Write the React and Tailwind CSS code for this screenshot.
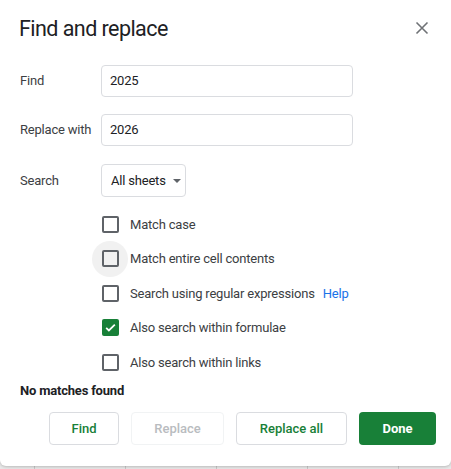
import React from "react";

function Checkbox({ checked, hover }) {
  return (
    <div className="relative flex h-[18px] w-[18px] shrink-0 items-center justify-center">
      {hover && (
        <div className="absolute left-1/2 top-1/2 h-[36px] w-[36px] -translate-x-1/2 -translate-y-1/2 rounded-full bg-[#f1f1f1]" />
      )}
      {checked ? (
        <div className="relative flex h-[17px] w-[17px] items-center justify-center rounded-[2px] bg-[#188038]">
          <svg width="13" height="13" viewBox="0 0 24 24">
            <path d="M4 12.5l5 5L20 6.5" fill="none" stroke="#fff" strokeWidth="3.2" />
          </svg>
        </div>
      ) : (
        <div className="relative h-[17px] w-[17px] rounded-[2px] border-2 border-[#5f6368]" />
      )}
    </div>
  );
}

function Row({ label, checked, hover, extra }) {
  return (
    <div className="flex h-[34.5px] items-center">
      <Checkbox checked={checked} hover={hover} />
      <span className="ml-[11px] text-[13px] text-[#3c4043]">{label}</span>
      {extra}
    </div>
  );
}

export default function App() {
  return (
    <div
      className="flex h-[469px] w-[451px] flex-col bg-[#e8e8e8] tracking-[-0.2px]"
      style={{ fontFamily: "Roboto, Arial, sans-serif" }}
    >
      <div className="relative h-[466px] w-full rounded-b-[6px] bg-white shadow-[0_1px_3px_rgba(0,0,0,0.2)]">
        <div className="flex items-start justify-between pl-[19px] pr-[22px] pt-[15px]">
          <h1 className="text-[21.5px] leading-[28px] tracking-[-0.55px] text-[#202124]">
            Find and replace
          </h1>
          <button className="mt-[6px] text-[#5f6368]">
            <svg width="14" height="14" viewBox="0 0 14 14">
              <path d="M1.5 1.5l11 11M12.5 1.5l-11 11" stroke="#6f7276" strokeWidth="1.6" />
            </svg>
          </button>
        </div>

        <div className="mt-[22px] flex flex-col pl-[20px]">
          <div className="flex items-center">
            <span className="w-[81px] text-[13px] text-[#3c4043]">Find</span>
            <div className="flex h-[32px] w-[252px] items-center rounded-[4px] border border-[#dadce0] px-[8px] text-[13px] text-[#202124]">
              2025
            </div>
          </div>
          <div className="mt-[17px] flex items-center">
            <span className="w-[81px] text-[13px] text-[#3c4043]">Replace with</span>
            <div className="flex h-[32px] w-[252px] items-center rounded-[4px] border border-[#dadce0] px-[8px] text-[13px] text-[#202124]">
              2026
            </div>
          </div>
          <div className="mt-[18px] flex items-center">
            <span className="w-[81px] text-[13px] text-[#3c4043]">Search</span>
            <div className="flex h-[33px] w-[85px] items-center rounded-[4px] border border-[#dadce0] pl-[9px] text-[13px] text-[#202124]">
              All sheets
              <svg className="ml-[7px]" width="8" height="4" viewBox="0 0 8 4">
                <path d="M0 0h8L4 4z" fill="#5f6368" />
              </svg>
            </div>
          </div>

          <div className="mt-[10px] flex flex-col pl-[81px]">
            <Row label="Match case" />
            <Row label="Match entire cell contents" hover />
            <Row
              label="Search using regular expressions"
              extra={<span className="ml-[8px] text-[13px] text-[#1a73e8]">Help</span>}
            />
            <Row label="Also search within formulae" checked />
            <Row label="Also search within links" />
          </div>

          <div className="mt-[1px] text-[13px] font-bold text-[#202124]">No matches found</div>
        </div>

        <div className="mt-[12px] flex justify-end gap-[12px] pr-[15px] tracking-normal">
          <button className="flex h-[33px] w-[70px] items-center justify-center rounded-[4px] border border-[#dadce0] text-[13px] font-medium text-[#188038]">
            Find
          </button>
          <button className="flex h-[33px] w-[93px] items-center justify-center rounded-[4px] border border-[#f1f3f4] text-[13px] font-medium text-[#b9bcc0]">
            Replace
          </button>
          <button className="flex h-[33px] w-[111px] items-center justify-center rounded-[4px] border border-[#dadce0] text-[13px] font-medium text-[#188038]">
            Replace all
          </button>
          <button className="flex h-[33px] w-[77px] items-center justify-center rounded-[4px] bg-[#188038] text-[13px] font-bold text-white">
            Done
          </button>
        </div>
      </div>
      <div className="flex h-[3px] w-full">
        <div className="w-[35px] border-r border-[#c8c8c8]" />
        <div className="w-[91px] border-r border-[#c8c8c8]" />
        <div className="w-[91px] border-r border-[#c8c8c8]" />
        <div className="w-[91px] border-r border-[#c8c8c8]" />
        <div className="w-[91px] border-r border-[#c8c8c8]" />
      </div>
    </div>
  );
}
